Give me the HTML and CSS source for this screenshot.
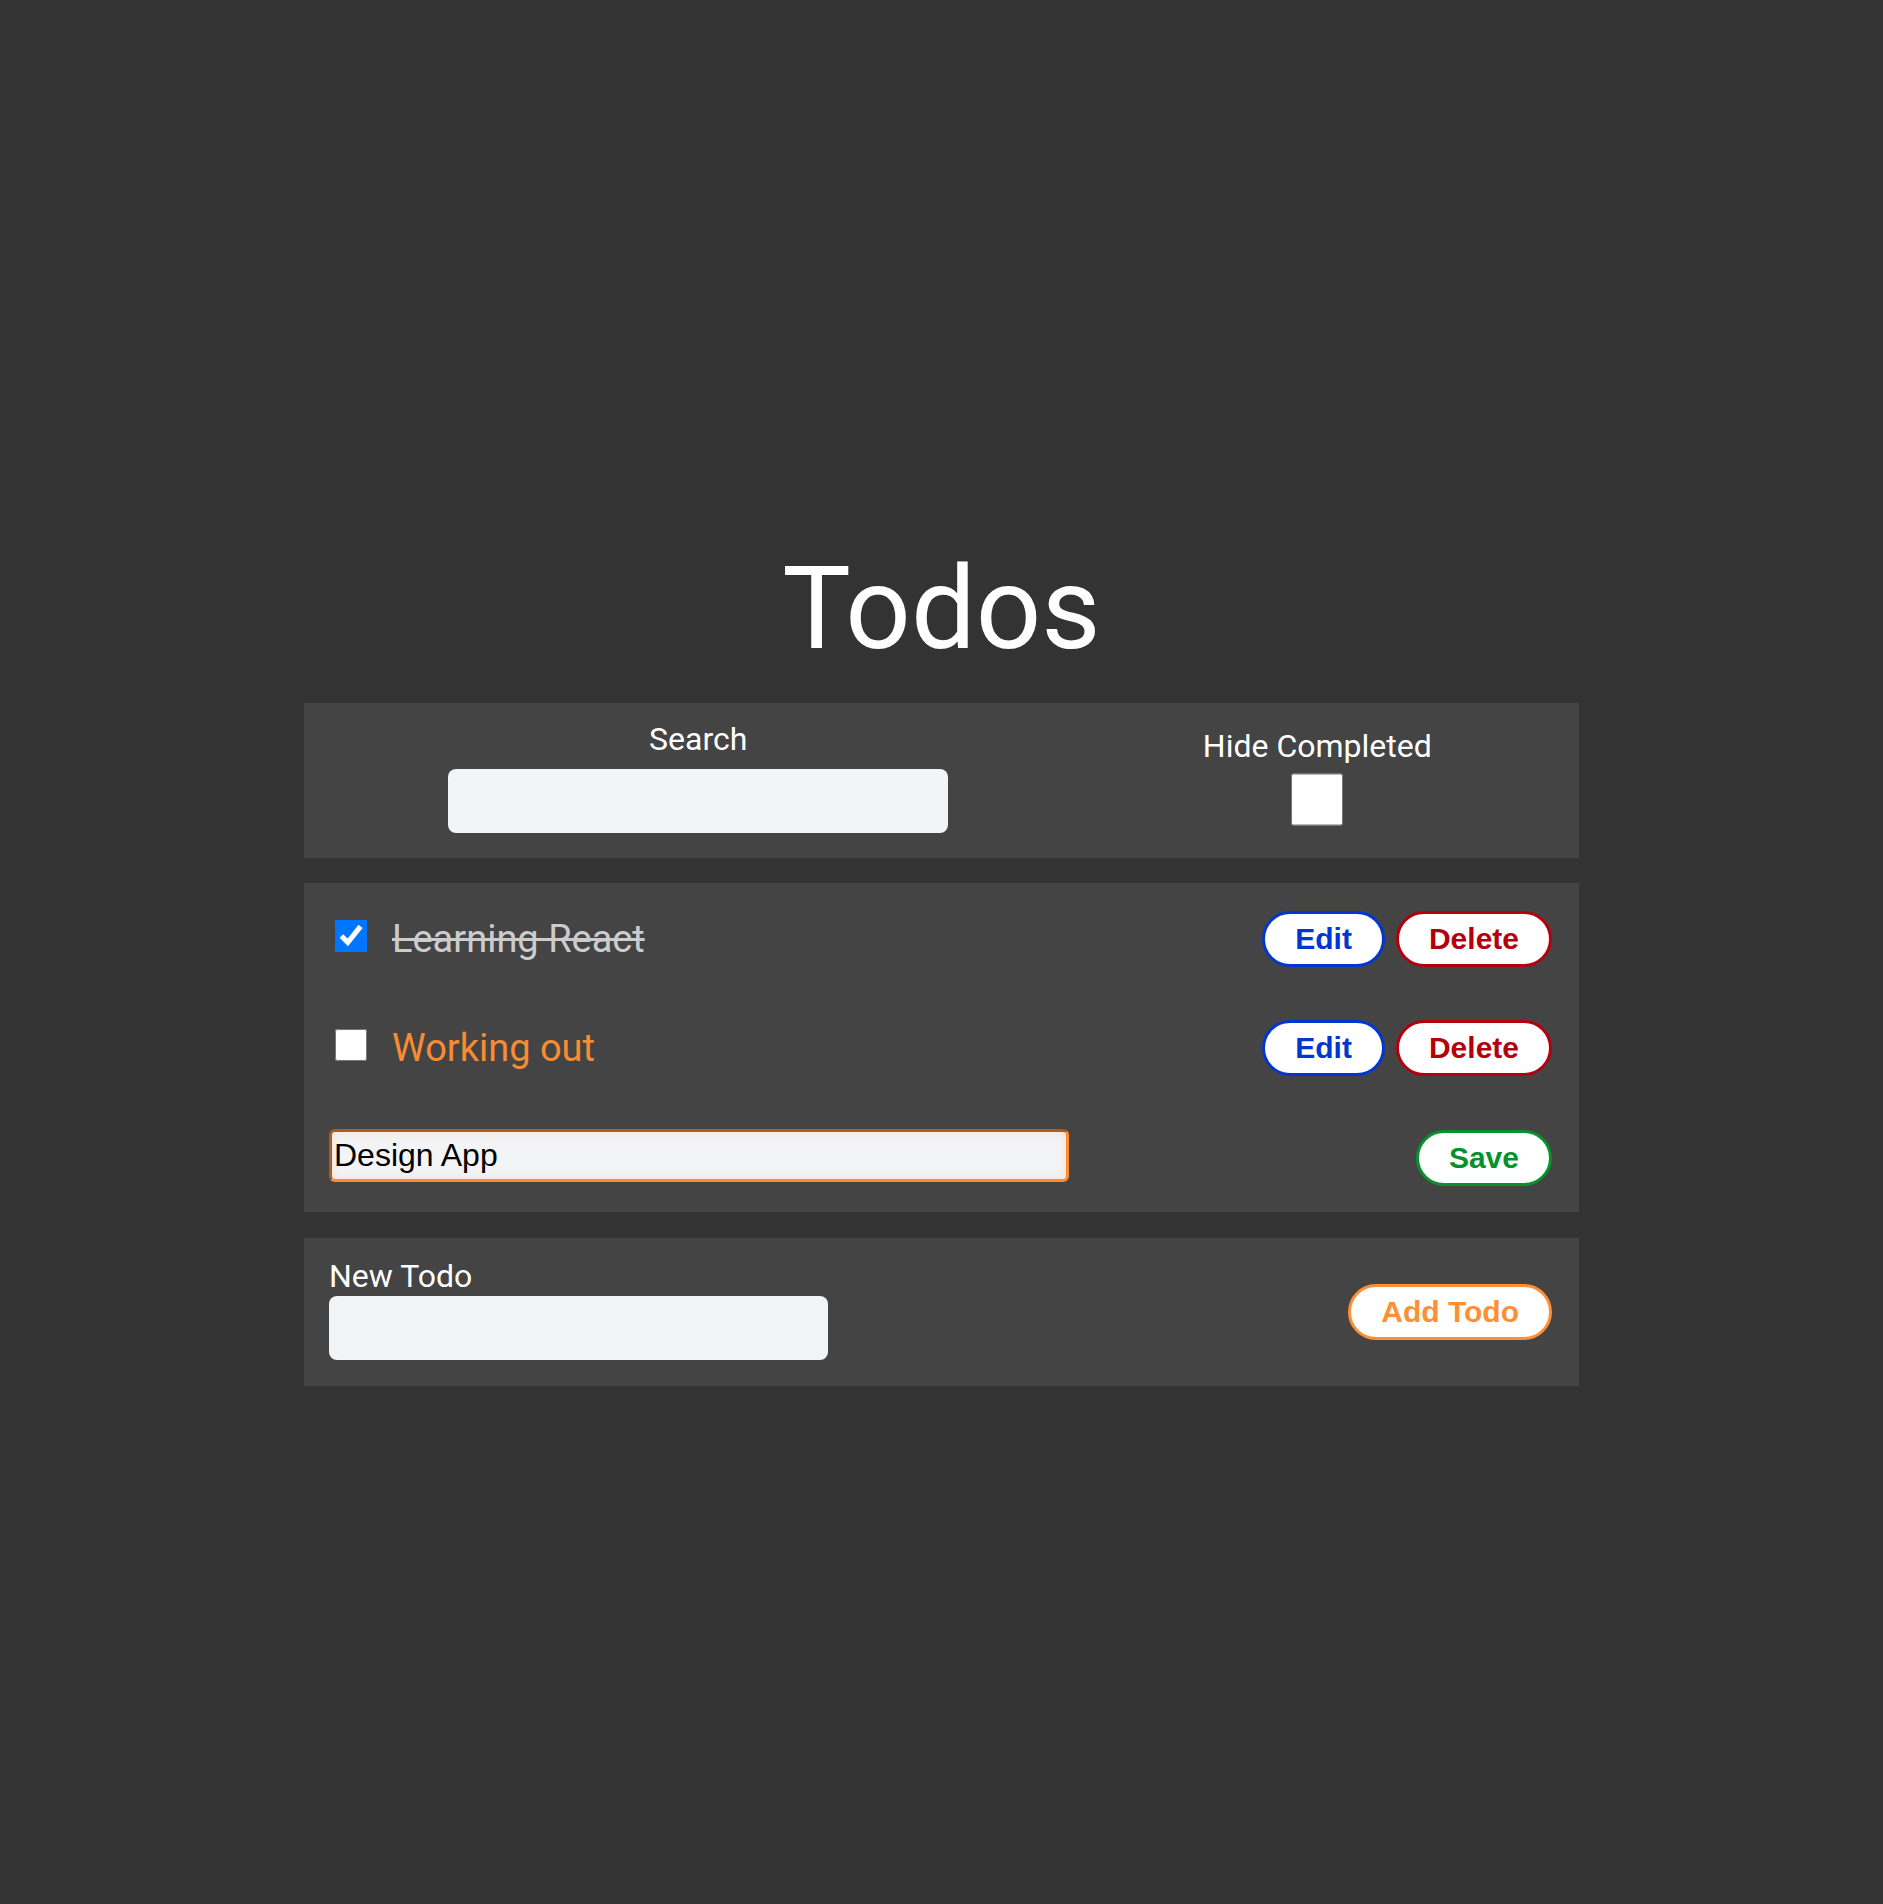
FILE: index.html
```html
<!DOCTYPE html>
<html lang="en">
<head>
<meta charset="utf-8">
<title>Todos</title>
<link rel="stylesheet" href="styles.css">
</head>
<body>
<div class="app">
  <h1 class="title">Todos</h1>

  <section class="panel controls">
    <div class="field search-field">
      <label class="field-label" for="search">Search</label>
      <input class="text-input search-input" id="search" type="text">
    </div>
    <div class="field hide-field">
      <label class="field-label" for="hide">Hide Completed</label>
      <input class="hide-check" id="hide" type="checkbox">
    </div>
  </section>

  <section class="panel todo-list">
    <div class="todo-row">
      <input class="todo-check" type="checkbox" checked>
      <span class="todo-text done">Learning React</span>
      <div class="actions">
        <button class="btn btn-edit">Edit</button>
        <button class="btn btn-delete">Delete</button>
      </div>
    </div>
    <div class="todo-row">
      <input class="todo-check" type="checkbox">
      <span class="todo-text active">Working out</span>
      <div class="actions">
        <button class="btn btn-edit">Edit</button>
        <button class="btn btn-delete">Delete</button>
      </div>
    </div>
    <div class="todo-row editing">
      <input class="edit-input" type="text" value="Design App">
      <div class="actions">
        <button class="btn btn-save">Save</button>
      </div>
    </div>
  </section>

  <section class="panel new-todo">
    <div class="field new-field">
      <label class="field-label" for="newtodo">New Todo</label>
      <input class="text-input new-input" id="newtodo" type="text">
    </div>
    <button class="btn btn-add">Add Todo</button>
  </section>
</div>
</body>
</html>
```

FILE: styles.css
```css
html, body {
  margin: 0;
  padding: 0;
}

body {
  background: #333333;
  font-family: Roboto, "Noto Sans", sans-serif;
  color: #ffffff;
  min-height: 1904px;
}

.app {
  padding-top: 541px;
}

.title {
  margin: 0 0 27px;
  font-size: 115px;
  font-weight: 400;
  line-height: normal;
  text-align: center;
  color: #ffffff;
}

.panel {
  width: 1275px;
  margin: 0 auto;
  box-sizing: border-box;
  background: #444444;
}

/* Controls panel */
.controls {
  display: flex;
  justify-content: space-around;
  align-items: center;
  padding: 17px 20px 25px 17px;
}

.field {
  display: flex;
  flex-direction: column;
}

.search-field,
.hide-field {
  align-items: center;
}

.field-label {
  font-size: 32px;
  line-height: normal;
  color: #ffffff;
}

.text-input {
  box-sizing: border-box;
  border: none;
  border-radius: 8px;
  background: #f3f4f6;
  height: 64px;
  padding: 0 10px;
  font-family: "Liberation Sans", Arial, sans-serif;
  font-size: 30px;
  outline: none;
}

.search-input {
  width: 500px;
  margin-top: 11px;
}

.hide-check {
  width: 52px;
  height: 53px;
  margin: 8px 0 0;
}

/* Todo list panel */
.todo-list {
  margin-top: 25px;
  padding: 27px 27px 27px 25px;
  display: flex;
  flex-direction: column;
  gap: 52px;
}

.todo-row {
  display: flex;
  align-items: center;
  height: 57px;
}

.todo-check {
  width: 32px;
  height: 32px;
  margin: 0 25px 5px 6px;
  flex: none;
}

.todo-text {
  flex: 1;
  font-size: 38px;
  line-height: normal;
}

.todo-text.done {
  color: #cccccc;
  text-decoration: line-through;
}

.todo-text.active {
  color: #f98c33;
}

.actions {
  display: flex;
  gap: 11px;
  margin-left: auto;
}

.todo-row.editing {
  align-items: flex-start;
}

.todo-row.editing .actions {
  margin-top: 2px;
}

.edit-input {
  box-sizing: border-box;
  width: 740px;
  height: 53px;
  margin-top: 1px;
  padding: 0 2px;
  border: 3px inset #ff8c33;
  border-radius: 6px;
  background: #f3f4f6;
  box-shadow: inset 0 0 10px rgba(255, 140, 51, 0.18);
  font-family: "Liberation Sans", Arial, sans-serif;
  font-size: 32px;
  color: #000000;
  outline: none;
}

/* Buttons */
.btn {
  font-family: "Liberation Sans", Arial, sans-serif;
  font-weight: 700;
  font-size: 30px;
  line-height: normal;
  padding: 8px 30px;
  border: 3px solid;
  border-radius: 999px;
  background: #ffffff;
  cursor: pointer;
}

.btn-edit {
  color: #0336d1;
  border-color: #0336d1;
}

.btn-delete {
  color: #b3000f;
  border-color: #b3000f;
}

.btn-save {
  color: #05922c;
  border-color: #05922c;
}

.btn-add {
  color: #ff8f36;
  border-color: #ff8f36;
}

/* New todo panel */
.new-todo {
  margin-top: 26px;
  padding: 19px 27px 20px 25px;
  display: flex;
  justify-content: space-between;
  align-items: center;
}

.new-field {
  align-items: flex-start;
}

.new-input {
  width: 499px;
  margin-top: 1px;
  margin-bottom: 6px;
}
```
